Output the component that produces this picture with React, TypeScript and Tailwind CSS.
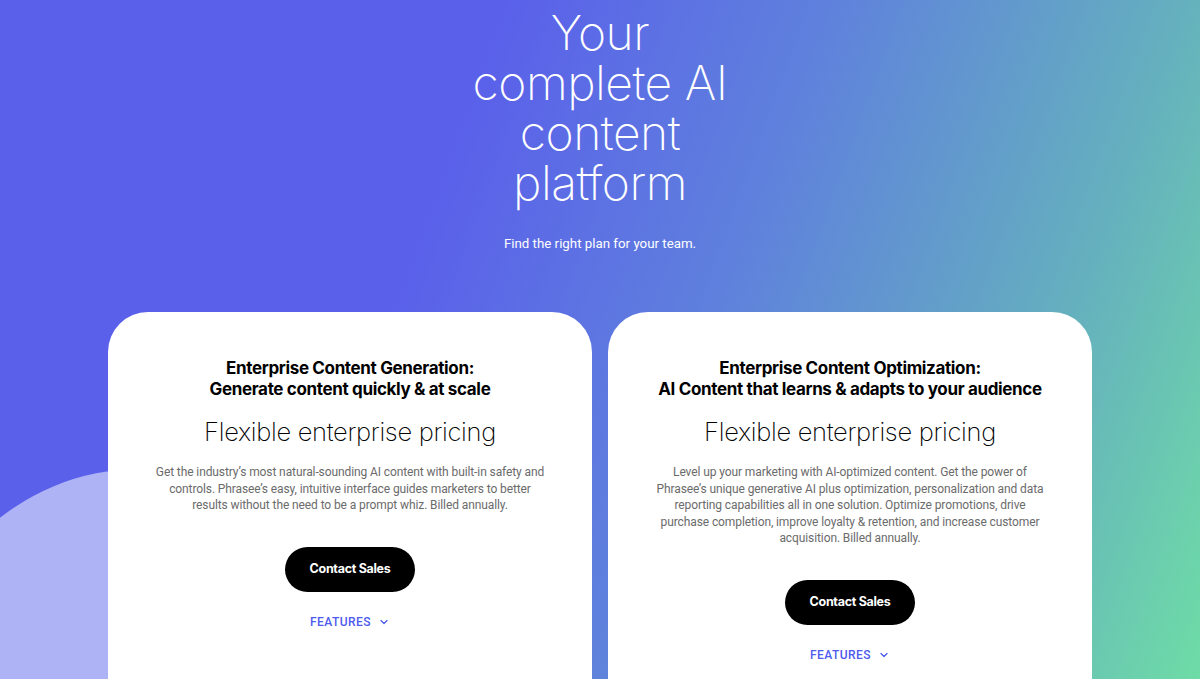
import React from "react";

const Chevron = () => (
  <svg width="12" height="12" viewBox="0 0 24 24" fill="none" stroke="currentColor" strokeWidth="2.5" strokeLinecap="round" strokeLinejoin="round">
    <path d="M6 9l6 6 6-6" />
  </svg>
);

function Card({ title1, title2, lines }: { title1: string; title2: string; lines: string[] }) {
  return (
    <div className="bg-white rounded-[40px] h-[420px] flex flex-col items-center pt-[46px] text-center">
      <h3 className="font-['Inter',sans-serif] font-bold text-[17px] leading-[21px] tracking-[-0.35px] text-black">
        {title1}
        <br />
        {title2}
      </h3>
      <div className="mt-[14px] font-['Inter',sans-serif] font-extralight text-[25.5px] leading-[36px] tracking-[-0.3px] text-black">
        Flexible enterprise pricing
      </div>
      <p className="mt-[14px] font-['Roboto',sans-serif] text-[12px] leading-[16.5px] tracking-[-0.1px] text-[#6b6b6b] whitespace-nowrap">
        {lines.map((l, i) => (
          <React.Fragment key={i}>
            {l}
            {i < lines.length - 1 && <br />}
          </React.Fragment>
        ))}
      </p>
      <button className="mt-[33px] w-[130px] h-[45px] rounded-full bg-black text-white font-['Inter',sans-serif] font-bold text-[12.5px] tracking-[-0.3px]">
        Contact Sales
      </button>
      <div className="mt-[22px] flex items-center gap-[7px] text-[#4d5bee] font-['Roboto',sans-serif] font-medium text-[12px] leading-[16px] tracking-[0.45px]">
        <span>FEATURES</span>
        <Chevron />
      </div>
    </div>
  );
}

export default function App() {
  return (
    <div className="relative w-full h-[679px] overflow-hidden bg-[linear-gradient(110deg,#5a60ea_35%,#5f82dc_58%,#65b0be_82%,#6edca6_100%)]">
      <div className="absolute left-[-85px] top-[469px] w-[450px] h-[450px] rounded-full bg-[#aeb3f6]" />
      <div className="relative flex flex-col items-center">
        <h1 className="mt-[8px] w-[280px] text-center text-white font-['Inter',sans-serif] font-extralight text-[48px] leading-[50px] tracking-[-0.5px]">
          Your complete AI content platform
        </h1>
        <p className="mt-[26px] text-white font-['Roboto',sans-serif] text-[13.3px] leading-[20px]">
          Find the right plan for your team.
        </p>
        <div className="mt-[58px] grid grid-cols-2 gap-[16px] w-[984px]">
          <Card
            title1="Enterprise Content Generation:"
            title2="Generate content quickly & at scale"
            lines={[
              "Get the industry’s most natural-sounding AI content with built-in safety and",
              "controls. Phrasee’s easy, intuitive interface guides marketers to better",
              "results without the need to be a prompt whiz. Billed annually.",
            ]}
          />
          <Card
            title1="Enterprise Content Optimization:"
            title2="AI Content that learns & adapts to your audience"
            lines={[
              "Level up your marketing with AI-optimized content. Get the power of",
              "Phrasee’s unique generative AI plus optimization, personalization and data",
              "reporting capabilities all in one solution. Optimize promotions, drive",
              "purchase completion, improve loyalty & retention, and increase customer",
              "acquisition. Billed annually.",
            ]}
          />
        </div>
      </div>
    </div>
  );
}
